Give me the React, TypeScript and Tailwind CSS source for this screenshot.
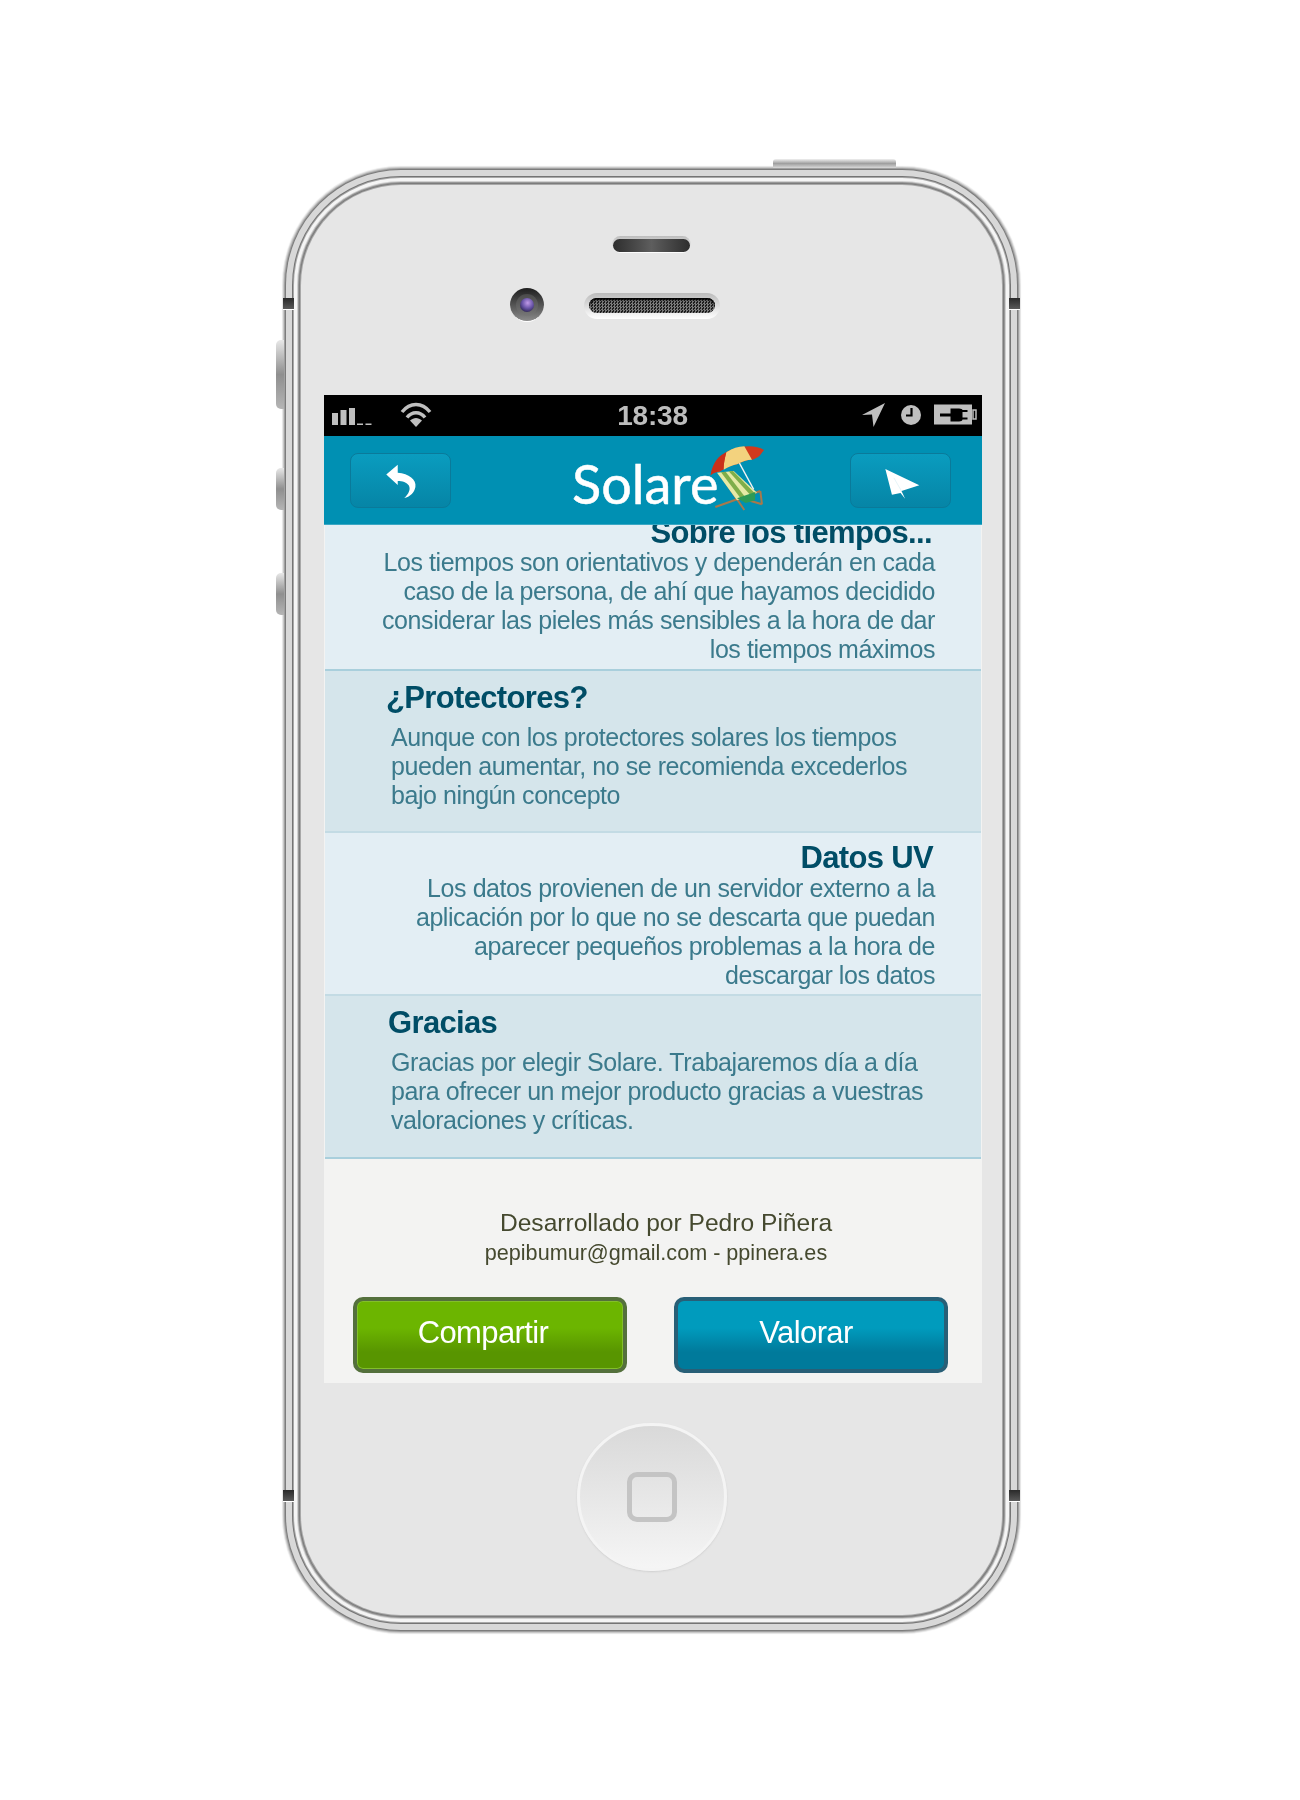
import React from "react";

const Lines = ({ lines }: { lines: string[] }) => (
  <>
    {lines.map((l) => (
      <div key={l} className="whitespace-nowrap">{l}</div>
    ))}
  </>
);

const Title = ({ children, className = "" }: { children: React.ReactNode; className?: string }) => (
  <div className={"text-[31px] leading-[30px] font-bold tracking-[-0.65px] text-[#004d66] " + className}>{children}</div>
);

const Body = ({ lines, className = "" }: { lines: string[]; className?: string }) => (
  <div className={"text-[25px] leading-[29px] tracking-[-0.43px] text-[#3b7a8c] " + className}>
    <Lines lines={lines} />
  </div>
);

const Notch = ({ className }: { className: string }) => (
  <div className={"absolute w-[11px] h-[12px] bg-gradient-to-b from-[#2a2a2a] to-[#5a5a5a] border-b border-white " + className} />
);

const SideButton = ({ className }: { className: string }) => (
  <div className={"absolute left-[-7px] w-[8px] rounded-l-[5px] bg-gradient-to-b from-[#e8e8e8] via-[#8f8f8f] to-[#b5b5b5] " + className} />
);

function Umbrella() {
  return (
    <svg viewBox="440 0 180 240" className="absolute left-[135px] top-0 w-[60px] h-[80px]">
      <path d="M478 98L552 207M465 198L600 150M530 168L605 190M600 150L605 190" stroke="#a8784a" strokeWidth="6" fill="none" />
      <path d="M470 95L520 90L590 155L530 178Z" fill="#e6eaa6" />
      <path d="M482 94L496 92L556 170L543 175Z" fill="#7fae4a" />
      <path d="M505 91L518 90L582 155L570 162Z" fill="#7fae4a" />
      <path d="M530 172L585 153L584 178L556 186Z" fill="#2e9a55" />
      <path d="M515 25L580 145" stroke="#f4f4f4" strokeWidth="4" />
      <path d="M451 102C458 62 492 30 520 24C555 12 590 14 611 27L598 44C590 50 582 54 575 56C560 56 545 62 530 70C512 72 494 82 478 92C468 92 458 96 451 102Z" fill="#d23a1c" />
      <path d="M498 34C515 22 535 16 552 16L575 56C560 56 545 62 530 70C518 72 504 78 490 86C490 64 494 48 498 34Z" fill="#f3d27e" />
      <path d="M451 102C458 62 476 44 498 34C494 50 490 66 489 86C474 88 460 94 451 102Z" fill="#c9301a" />
    </svg>
  );
}

export default function App() {
  return (
    <div className="min-h-[1800px] bg-white pt-[167px] pl-[283px] font-['Liberation_Sans',Arial,sans-serif]">
      <div className="relative w-[737px] h-[1466px] pt-[18px] px-[18px]">
        {/* top button */}
        <div className="absolute left-[490px] top-[-8px] w-[123px] h-[9px] rounded-t-[3px] bg-gradient-to-b from-[#f0f0f0] via-[#a0a0a0] to-[#d8d8d8]" />
        <SideButton className="top-[173px] h-[69px]" />
        <SideButton className="top-[301px] h-[42px]" />
        <SideButton className="top-[406px] h-[42px]" />

        <div className="w-[701px] h-[1430px] rounded-[100px] bg-[#e6e6e6] flex flex-col items-center shadow-[0_0_0_1px_#a8a8a8,0_0_0_2px_#7c7c7c,0_0_0_3px_#989898,0_0_0_4px_#d0d0d0,0_0_0_7px_#f5f5f5,0_0_0_8px_#a8a8a8,0_0_0_9px_#747474,0_0_0_15px_#d8d8d8,0_0_0_16px_#7c7c7c,0_0_0_17px_#a0a0a0,0_0_0_18px_#c8c8c8,0_0_1px_19px_#e4e4e4]">
          {/* earpiece */}
          <div className="mt-[51px] w-[79px] h-[17px] rounded-full bg-gradient-to-b from-[#bdbdbd] to-white px-px pt-[3px]">
            <div className="h-[13px] rounded-full bg-gradient-to-r from-[#2e2e2e] via-[#5e5e5e] to-[#2e2e2e]" />
          </div>

          {/* camera + speaker */}
          <div className="mt-[35px] self-start ml-[209px] flex items-center gap-[40px]">
            <div className="w-[34px] h-[34px] rounded-full bg-gradient-to-b from-[#1f1f1f] to-[#8c8c8c] border-b border-white flex items-center justify-center">
              <div className="w-[22px] h-[22px] rounded-full bg-gradient-to-b from-[#4a4a4a] to-[#777] flex items-center justify-center">
                <div className="w-[14px] h-[14px] rounded-full bg-[radial-gradient(circle_at_55%_35%,#c09ae8_0%,#6a55a8_45%,#1d1a3a_90%)]" />
              </div>
            </div>
            <div className="mt-[2px] w-[136px] h-[26px] rounded-full bg-gradient-to-b from-[#bcbcbc] to-white px-[5px] pt-[5px]">
              <div className="h-[15px] rounded-full bg-[repeating-conic-gradient(#7a7a7a_0_25%,#1e1e1e_0_50%)] bg-[length:3px_3px] shadow-[inset_0_2px_2px_#000]" />
            </div>
          </div>

          {/* screen */}
          <div className="mt-[73px] self-start ml-[23px] w-[658px] h-[988px] shrink-0 bg-[#f3f3f2] flex flex-col overflow-hidden">
            {/* status bar */}
            <div className="relative h-[41px] shrink-0 bg-black flex items-center justify-center text-[28px] leading-none font-bold text-[#bdbdbd] tracking-[-0.2px] pr-px blur-[0.3px]">
              18:38
              <svg viewBox="0 0 658 41" className="absolute inset-0 w-[658px] h-[41px]" fill="#bfbfbf">
                <rect x="8" y="18" width="6" height="12" />
                <rect x="16.5" y="15" width="6" height="15" />
                <rect x="25" y="13" width="6" height="17" />
                <rect x="33" y="28.5" width="6" height="1.5" />
                <rect x="41.5" y="28.5" width="6" height="1.5" />
                <path d="M78 17C86 7 98 7 106 17" stroke="#bfbfbf" strokeWidth="3.5" fill="none" />
                <path d="M83 22.5C88 16 96 16 101 22.5" stroke="#bfbfbf" strokeWidth="3.5" fill="none" />
                <path d="M92 32L86 25.5C90 22 94 22 98 25.5Z" />
                <path d="M561 8L538 20L548 19.5L549.5 32Z" />
                <circle cx="587" cy="20" r="10" />
                <path d="M587.5 13V20.5H582" stroke="#000" strokeWidth="2.2" fill="none" />
                <path d="M610 9.5H648V29.5H610Z" />
                <rect x="649" y="15" width="3" height="9" fill="none" stroke="#bfbfbf" strokeWidth="1.5" />
                <path d="M616 18.5H626.5V13.5H635C637 13.5 638.5 14.5 638.5 15H643.5V17H638.5V22.5H643.5V24.5H638.5C638.5 25.5 637 26.5 635 26.5H626.5V21.5H616Z" fill="#000" />
              </svg>
            </div>

            {/* nav */}
            <div className="h-[89px] shrink-0 bg-[#0090b3] border-b border-[#3aa7c4] flex items-center pl-[26px] pr-[31px] pt-px">
              <button className="w-[101px] h-[55px] rounded-[8px] border border-[#0a7a9a] bg-gradient-to-b from-[#0a9cbf] to-[#0685a6] flex items-center justify-center">
                <svg viewBox="190 205 96 110" className="w-[32px] h-[36px]">
                  <path d="M193 240L228 210L228 235C262 238 286 256 282 278C279 296 265 308 248 312C262 300 268 285 262 274C256 264 242 260 228 260V272Z" fill="#fff" />
                </svg>
              </button>
              <div className="relative ml-[121px] w-[210px] h-[80px] text-white text-[54px] leading-[86px] font-['Lato',sans-serif] [-webkit-text-stroke:0.5px_#fff] blur-[0.3px]">
                Solare
                <Umbrella />
              </div>
              <button className="ml-auto w-[101px] h-[55px] rounded-[8px] border border-[#0a7a9a] bg-gradient-to-b from-[#0a9cbf] to-[#0685a6] flex items-center justify-center pl-[3px] pt-[5px]">
                <svg viewBox="130 212 115 100" className="w-[38px] h-[33px]">
                  <path d="M137 218L240 267L186 285L197 308L183 291L157 296Z" fill="#fff" />
                  <path d="M163 245L186 285" stroke="#cfe9f1" strokeWidth="1.5" />
                </svg>
              </button>
            </div>

            {/* rows */}
            <div className="mx-px blur-[0.3px]">
              <div className="h-[146px] overflow-hidden bg-[#e3eef4] border-b-2 border-[#a9cfdc] pr-[46px] text-right">
                <Title className="-mt-[7px] pr-[3px]">Sobre los tiempos...</Title>
                <Body lines={["Los tiempos son orientativos y dependerán en cada", "caso de la persona, de ahí que hayamos decidido", "considerar las pieles más sensibles a la hora de dar", "los tiempos máximos"]} />
              </div>
              <div className="h-[162px] bg-[#d5e5eb] border-b-2 border-[#c3dbe4] pl-[61px] pt-[12px]">
                <Title>¿Protectores?</Title>
                <Body className="mt-[10px] pl-[5px]" lines={["Aunque con los protectores solares los tiempos", "pueden aumentar, no se recomienda excederlos", "bajo ningún concepto"]} />
              </div>
              <div className="h-[163px] bg-[#e3eef4] border-b-2 border-[#c3dbe4] pr-[46px] pt-[10px] text-right">
                <Title className="pr-[2px]">Datos UV</Title>
                <Body className="mt-[1px]" lines={["Los datos provienen de un servidor externo a la", "aplicación por lo que no se descarta que puedan", "aparecer pequeños problemas a la hora de", "descargar los datos"]} />
              </div>
              <div className="h-[163px] bg-[#d5e5eb] border-b-2 border-[#a9cfdc] pl-[63px] pt-[12px]">
                <Title>Gracias</Title>
                <Body className="mt-[10px] pl-[3px]" lines={["Gracias por elegir Solare. Trabajaremos día a día", "para ofrecer un mejor producto gracias a vuestras", "valoraciones y críticas."]} />
              </div>
            </div>

            {/* footer */}
            <div className="pt-[49px] text-[#45492f] text-center blur-[0.3px]">
              <div className="text-[24.6px] leading-[30px] pl-[26px]">Desarrollado por Pedro Piñera</div>
              <div className="text-[21.6px] leading-[30px] pl-[6px]">pepibumur@gmail.com - ppinera.es</div>
              <div className="mt-[29px] flex justify-between pl-[29px] pr-[34px]">
                <button className="w-[274px] h-[76px] rounded-[10px] border-[4px] border-[#54703c] bg-gradient-to-b from-[#6cb500] from-40% to-[#589500] to-75% shadow-[inset_0_0_0_1px_#83bf2a] text-white text-[31px] tracking-[-0.6px] pr-[14px] pb-[4px]">
                  Compartir
                </button>
                <button className="w-[274px] h-[76px] rounded-[10px] border-[4px] border-[#285f77] bg-gradient-to-b from-[#009bbd] from-40% to-[#007a9b] to-75% text-white text-[31px] tracking-[-0.6px] pr-[10px] pb-[4px]">
                  Valorar
                </button>
              </div>
            </div>
          </div>

          {/* home button */}
          <div className="mt-[40px] w-[150px] h-[148px] rounded-full bg-gradient-to-b from-[#d9d9d9] to-[#f5f5f5] border-[3px] border-[#f4f4f4] shadow-[0_1px_2px_#d0d0d0] flex items-center justify-center">
            <div className="w-[50px] h-[50px] rounded-[10px] border-[5px] border-[#c4c4c4]" />
          </div>
        </div>

        <Notch className="left-0 top-[131px]" />
        <Notch className="left-[726px] top-[131px]" />
        <Notch className="left-0 top-[1323px]" />
        <Notch className="left-[726px] top-[1323px]" />
      </div>
    </div>
  );
}
